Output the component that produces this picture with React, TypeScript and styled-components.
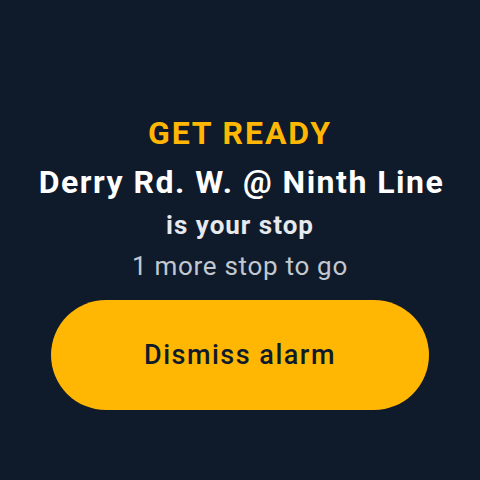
import React from "react";
import styled, { createGlobalStyle } from "styled-components";

const Global = createGlobalStyle`
  html, body { margin: 0; padding: 0; background: #0f1b2b; }
  body { font-family: Roboto, "Noto Sans", sans-serif; }
`;

const Screen = styled.div`
  width: 480px;
  height: 480px;
  background: #0f1b2b;
  display: flex;
  flex-direction: column;
  align-items: center;
  padding-top: 111px;
  box-sizing: border-box;
`;

const Kicker = styled.div`
  color: #ffb703;
  font-size: 32px;
  font-weight: 700;
  line-height: 44px;
  letter-spacing: 1.9px;
`;

const StopName = styled.div`
  margin-top: 5px;
  padding-left: 3px;
  color: #ffffff;
  font-size: 32px;
  font-weight: 700;
  line-height: 44px;
  letter-spacing: 1.5px;
`;

const Subline = styled.div<{ $muted?: boolean }>`
  margin-top: 1px;
  color: ${(p) => (p.$muted ? "#c3c8d0" : "#e6e9ed")};
  font-size: 26px;
  font-weight: ${(p) => (p.$muted ? 400 : 700)};
  line-height: 40px;
  letter-spacing: ${(p) => (p.$muted ? 0.7 : 1)}px;
`;

const Dismiss = styled.button`
  margin-top: 14px;
  width: 378px;
  height: 110px;
  padding: 0;
  border: none;
  border-radius: 55px;
  background: #ffb703;
  color: #0f1b2b;
  font-family: Roboto, "Noto Sans", sans-serif;
  font-size: 27px;
  font-weight: 500;
  letter-spacing: 1.5px;
  cursor: pointer;
`;

export default function App() {
  return (
    <>
      <Global />
      <Screen>
        <Kicker>GET READY</Kicker>
        <StopName>Derry Rd. W. @ Ninth Line</StopName>
        <Subline>is your stop</Subline>
        <Subline $muted>1 more stop to go</Subline>
        <Dismiss>Dismiss alarm</Dismiss>
      </Screen>
    </>
  );
}
